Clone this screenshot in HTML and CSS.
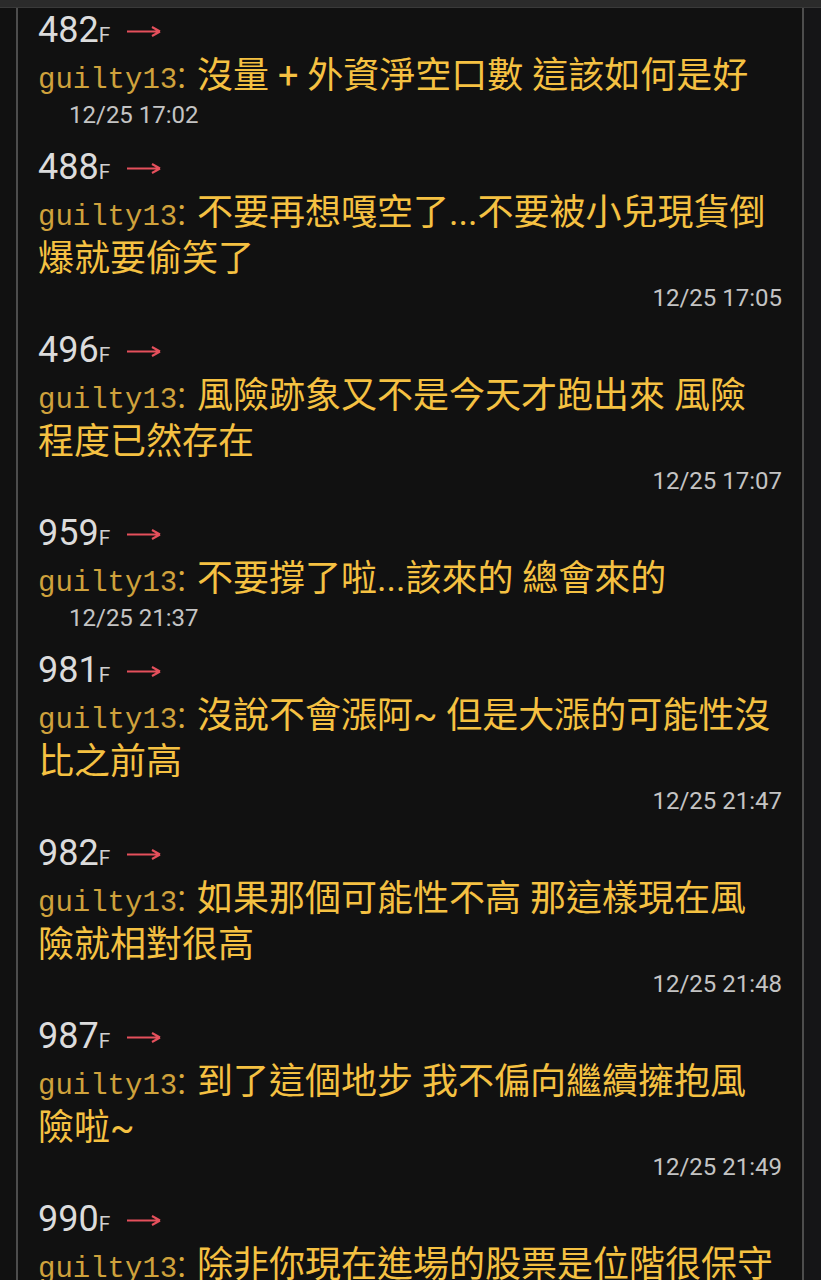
FILE: index.html
```html
<!DOCTYPE html>
<html lang="zh-Hant">
<head>
<meta charset="utf-8">
<title>推文</title>
<link rel="stylesheet" href="styles.css">
</head>
<body>
<div class="topbar"></div>
<div class="page">
  <div class="box">
    <div class="push">
      <div class="floor">482<span class="f">F</span><svg class="arrow" width="34" height="12" viewBox="0 0 34 12"><path d="M0 6.5H32.5M33 6.5L25 2M33 6.5L25 11" fill="none" stroke="#e5505c" stroke-width="2.1"/></svg></div>
      <div class="content"><span class="user">guilty13</span><span class="colon">:</span>沒量 + 外資淨空口數 這該如何是好</div>
      <div class="ts ts-left">12/25 17:02</div>
    </div>
    <div class="push">
      <div class="floor">488<span class="f">F</span><svg class="arrow" width="34" height="12" viewBox="0 0 34 12"><path d="M0 6.5H32.5M33 6.5L25 2M33 6.5L25 11" fill="none" stroke="#e5505c" stroke-width="2.1"/></svg></div>
      <div class="content"><span class="user">guilty13</span><span class="colon">:</span>不要再想嘎空了...不要被小兒現貨倒爆就要偷笑了</div>
      <div class="ts">12/25 17:05</div>
    </div>
    <div class="push">
      <div class="floor">496<span class="f">F</span><svg class="arrow" width="34" height="12" viewBox="0 0 34 12"><path d="M0 6.5H32.5M33 6.5L25 2M33 6.5L25 11" fill="none" stroke="#e5505c" stroke-width="2.1"/></svg></div>
      <div class="content"><span class="user">guilty13</span><span class="colon">:</span>風險跡象又不是今天才跑出來 風險程度已然存在</div>
      <div class="ts">12/25 17:07</div>
    </div>
    <div class="push">
      <div class="floor">959<span class="f">F</span><svg class="arrow" width="34" height="12" viewBox="0 0 34 12"><path d="M0 6.5H32.5M33 6.5L25 2M33 6.5L25 11" fill="none" stroke="#e5505c" stroke-width="2.1"/></svg></div>
      <div class="content"><span class="user">guilty13</span><span class="colon">:</span>不要撐了啦...該來的 總會來的</div>
      <div class="ts ts-left">12/25 21:37</div>
    </div>
    <div class="push">
      <div class="floor">981<span class="f">F</span><svg class="arrow" width="34" height="12" viewBox="0 0 34 12"><path d="M0 6.5H32.5M33 6.5L25 2M33 6.5L25 11" fill="none" stroke="#e5505c" stroke-width="2.1"/></svg></div>
      <div class="content"><span class="user">guilty13</span><span class="colon">:</span>沒說不會漲阿~ 但是大漲的可能性沒比之前高</div>
      <div class="ts">12/25 21:47</div>
    </div>
    <div class="push">
      <div class="floor">982<span class="f">F</span><svg class="arrow" width="34" height="12" viewBox="0 0 34 12"><path d="M0 6.5H32.5M33 6.5L25 2M33 6.5L25 11" fill="none" stroke="#e5505c" stroke-width="2.1"/></svg></div>
      <div class="content"><span class="user">guilty13</span><span class="colon">:</span>如果那個可能性不高 那這樣現在風險就相對很高</div>
      <div class="ts">12/25 21:48</div>
    </div>
    <div class="push">
      <div class="floor">987<span class="f">F</span><svg class="arrow" width="34" height="12" viewBox="0 0 34 12"><path d="M0 6.5H32.5M33 6.5L25 2M33 6.5L25 11" fill="none" stroke="#e5505c" stroke-width="2.1"/></svg></div>
      <div class="content"><span class="user">guilty13</span><span class="colon">:</span>到了這個地步 我不偏向繼續擁抱風險啦~</div>
      <div class="ts">12/25 21:49</div>
    </div>
    <div class="push">
      <div class="floor">990<span class="f">F</span><svg class="arrow" width="34" height="12" viewBox="0 0 34 12"><path d="M0 6.5H32.5M33 6.5L25 2M33 6.5L25 11" fill="none" stroke="#e5505c" stroke-width="2.1"/></svg></div>
      <div class="content"><span class="user">guilty13</span><span class="colon">:</span>除非你現在進場的股票是位階很保守的</div>
      <div class="ts">12/25 21:52</div>
    </div>
  </div>
  <div class="side"></div>
</div>
</body>
</html>
```

FILE: styles.css
```css
html, body {
  margin: 0;
  padding: 0;
}
body {
  background: #111111;
  height: 1280px;
  overflow: hidden;
  font-family: Roboto, "Noto Sans CJK TC", sans-serif;
}
.topbar {
  height: 7px;
  background: #2b2b2b;
  border-bottom: 1px solid #3a3a3a;
}
.page {
  display: flex;
  min-height: 1272px;
}
.box {
  margin-left: 16px;
  width: 743px;
  padding: 0 21px 0 20px;
  border-left: 2px solid #4d4d4d;
  border-right: 2px solid #4d4d4d;
  background: #111111;
}
.side {
  flex: 1;
  background: #151517;
}
.push {
  display: flex;
  flex-direction: column;
}
.floor {
  height: 45px;
  line-height: 45px;
  font-size: 36px;
  color: #dcdcdc;
  white-space: nowrap;
}
.f {
  font-size: 21px;
  line-height: 1;
  color: #d0d0d0;
}
.arrow {
  margin-left: 17px;
  vertical-align: 5px;
}
.content {
  font-size: 36px;
  line-height: 46px;
  color: #f5c142;
}
.user {
  font-family: "Liberation Mono", monospace;
  font-size: 29px;
  line-height: 1;
  color: #cfa23c;
}
.colon {
  margin-left: 0;
  margin-right: 11px;
  color: #d9ab3e;
}
.ts {
  font-size: 24px;
  line-height: 32px;
  height: 32px;
  margin-bottom: 14px;
  margin-right: -1px;
  color: #c4c4c4;
  text-align: right;
}
.ts-left {
  text-align: left;
  padding-left: 31px;
}
```
